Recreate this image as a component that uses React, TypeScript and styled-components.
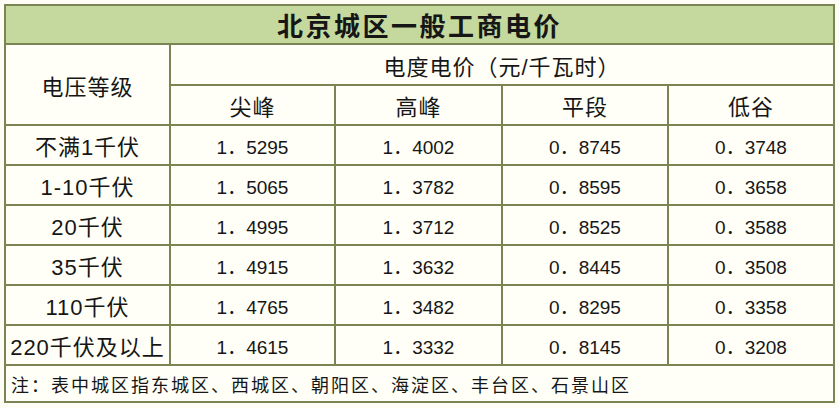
import React from "react";
import styled, { createGlobalStyle } from "styled-components";

const Global = createGlobalStyle`
  html, body { margin: 0; padding: 0; background: #fdfdf6; }
  body { width: 839px; height: 408px; overflow: hidden; }
`;

const Page = styled.div`
  padding: 4px 0 0 4px;
`;

const Grid = styled.div`
  display: grid;
  width: max-content;
  grid-template-columns: 163px 163px 165px 164px 164px;
  grid-template-rows: 37px 39px 38px repeat(6, 38px) 35px;
  gap: 2px;
  padding: 2px;
  background: #7b8553;
  font-family: "Liberation Sans", "Noto Sans CJK SC", sans-serif;
  color: #161616;
`;

const Cell = styled.div<{ $col?: string; $row?: string }>`
  background: #fffff7;
  display: flex;
  align-items: center;
  justify-content: center;
  font-size: 22px;
  letter-spacing: 1px;
  white-space: nowrap;
  grid-column: ${(p) => p.$col ?? "auto"};
  grid-row: ${(p) => p.$row ?? "auto"};
`;

const Title = styled(Cell)`
  background: #c5d89d;
  font-family: "Noto Sans CJK SC", sans-serif;
  font-weight: 700;
  font-size: 26px;
  letter-spacing: 2.5px;
`;

const NumCell = styled(Cell)`
  font-size: 19px;
  letter-spacing: 0;
  padding-top: 1px;
`;

const Note = styled(Cell)`
  justify-content: flex-start;
  padding-left: 5px;
  font-size: 18px;
  letter-spacing: 2px;
`;

const rows: [string, string[]][] = [
  ["不满1千伏", ["1．5295", "1．4002", "0．8745", "0．3748"]],
  ["1-10千伏", ["1．5065", "1．3782", "0．8595", "0．3658"]],
  ["20千伏", ["1．4995", "1．3712", "0．8525", "0．3588"]],
  ["35千伏", ["1．4915", "1．3632", "0．8445", "0．3508"]],
  ["110千伏", ["1．4765", "1．3482", "0．8295", "0．3358"]],
  ["220千伏及以上", ["1．4615", "1．3332", "0．8145", "0．3208"]],
];

export default function App() {
  return (
    <>
      <Global />
      <Page>
        <Grid>
          <Title $col="1 / 6">北京城区一般工商电价</Title>
          <Cell $col="1" $row="2 / 4">电压等级</Cell>
          <Cell $col="2 / 6">电度电价（元/千瓦时）</Cell>
          <Cell>尖峰</Cell>
          <Cell>高峰</Cell>
          <Cell>平段</Cell>
          <Cell>低谷</Cell>
          {rows.map(([label, vals]) => (
            <React.Fragment key={label}>
              <Cell>{label}</Cell>
              {vals.map((v, i) => (
                <NumCell key={i}>{v}</NumCell>
              ))}
            </React.Fragment>
          ))}
          <Note $col="1 / 6">注：表中城区指东城区、西城区、朝阳区、海淀区、丰台区、石景山区</Note>
        </Grid>
      </Page>
    </>
  );
}
